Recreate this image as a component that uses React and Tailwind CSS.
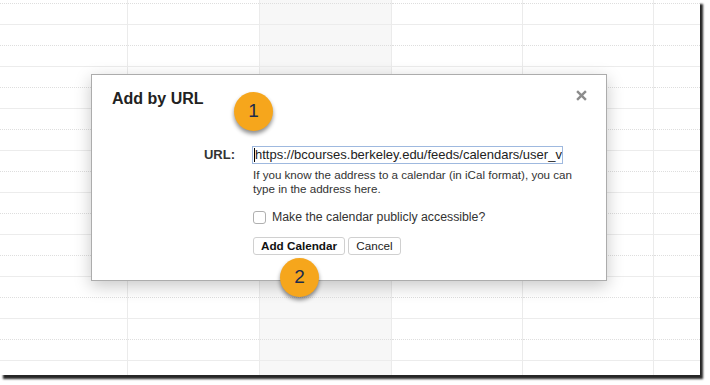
import React from 'react';

const columns = [
  { w: 'w-[128px] border-r', bg: 'bg-white' },
  { w: 'w-[132px] border-r', bg: 'bg-white' },
  { w: 'w-[132px] border-r', bg: 'bg-[#f7f7f7]' },
  { w: 'w-[131px] border-r', bg: 'bg-white' },
  { w: 'w-[131px] border-r', bg: 'bg-white' },
  { w: 'flex-1', bg: 'bg-white' },
];

const rows = Array.from({ length: 17 }, (_, i) => i);

const Badge = ({ n, className }) => (
  <div
    className={
      'absolute w-[39px] h-[39px] rounded-full bg-[#f6a61c] flex items-center justify-center text-[19px] text-[#1c2c4c] shadow-[0_3px_4px_rgba(0,0,0,0.45)] ' +
      className
    }
  >
    {n}
  </div>
);

const App = () => {
  return (
    <div className="w-[710px] h-[385px] bg-white font-['Liberation_Sans',Arial,sans-serif]">
      <div className="relative w-[700px] h-[375px] overflow-hidden shadow-[3px_4px_2px_rgba(0,0,0,0.85)]">
        {/* calendar grid behind */}
        <div className="flex h-full">
          {columns.map((c, ci) => (
            <div key={ci} className={`${c.w} ${c.bg} border-[#ebebeb] h-full`}>
              <div className="h-[4px] border-b border-dotted border-[#dedede]" />
              {rows.map((i) => (
                <div
                  key={i}
                  className={
                    i % 2 === 0
                      ? 'h-[21px] border-b border-[#ececec]'
                      : 'h-[21px] border-b border-dotted border-[#dedede]'
                  }
                />
              ))}
            </div>
          ))}
        </div>

        {/* dialog */}
        <div className="absolute left-[91px] top-[74px] w-[516px] h-[207px] bg-white border border-[#acacac] shadow-[0_5px_16px_rgba(0,0,0,0.22)] pl-[20px] pt-[15px]">
          <h2 className="text-[16px] leading-[18px] font-bold text-[#222]">Add by URL</h2>

          <button className="absolute right-[19px] top-[15px] w-[11px] h-[11px]">
            <svg viewBox="0 0 10 10" className="w-[11px] h-[11px]">
              <path d="M1 1L9 9M9 1L1 9" stroke="#8c8c8c" strokeWidth="2.2" />
            </svg>
          </button>

          <div className="flex mt-[38px]">
            <label className="w-[123px] mr-[17px] text-right text-[13px] leading-[18px] font-bold text-[#333]">
              URL:
            </label>
            <div>
              <div className="relative w-[311px] h-[18px] border border-[#9fb9df] text-[13px] leading-[16px] text-[#222] pl-[2px] overflow-hidden whitespace-nowrap">
                <span className="absolute left-[1px] top-[1px] w-px h-[14px] bg-black" />
                https://bcourses.berkeley.edu/feeds/calendars/user_v
              </div>
              <p className="mt-[4px] text-[11.6px] leading-[14px] text-[#333] pl-[1px]">
                If you know the address to a calendar (in iCal format), you can
                <br />
                type in the address here.
              </p>
              <label className="flex items-center mt-[14px] text-[12.3px] leading-[15px] text-[#333]">
                <span className="w-[13px] h-[13px] rounded-[3px] border border-[#b0b0b0] bg-white ml-[1px] mr-[6px]" />
                Make the calendar publicly accessible?
              </label>
              <div className="flex gap-[3px] mt-[12px] ml-[1px]">
                <button className="h-[18px] w-[92px] rounded-[3px] border border-[#d0d0d0] bg-white text-[11.7px] leading-[16px] font-bold text-[#111]">
                  Add Calendar
                </button>
                <button className="h-[18px] w-[53px] rounded-[3px] border border-[#d0d0d0] bg-white text-[11.7px] leading-[16px] text-[#222]">
                  Cancel
                </button>
              </div>
            </div>
          </div>
        </div>

        <Badge n="1" className="left-[234px] top-[92px]" />
        <Badge n="2" className="left-[280px] top-[258px]" />
      </div>
    </div>
  );
};

export default App;
